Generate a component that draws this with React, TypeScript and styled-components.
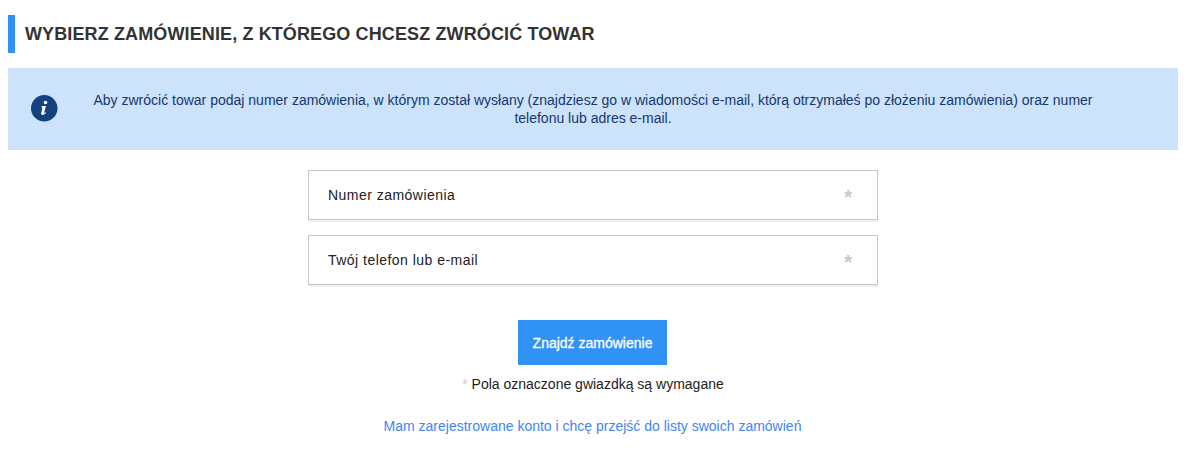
import styled, { createGlobalStyle } from 'styled-components'

const GlobalStyle = createGlobalStyle`
  html, body {
    margin: 0;
    background: #fff;
    font-family: 'Liberation Sans', Arial, sans-serif;
  }
`

const App = () => {
  return (
    <Page>
      <GlobalStyle />
      <Title>Wybierz zamówienie, z którego chcesz zwrócić towar</Title>
      <InfoBox>
        <InfoIcon viewBox="0 0 27 27" aria-hidden="true">
          <circle cx="13.5" cy="13.5" r="13.5" fill="#14407f" />
          <circle cx="14.8" cy="7.6" r="1.8" fill="#fff" />
          <path
            d="M10.9 11.3h4.3l-1.7 6.6c-.15.6.3.7 1.5-.3l.4.5c-1.2 1.4-2.4 2.2-3.6 2.2-1.2 0-1.7-.8-1.4-2l1.2-4.7c.15-.6-.2-.9-.9-.9z"
            fill="#fff"
          />
        </InfoIcon>
        <InfoText>
          Aby zwrócić towar podaj numer zamówienia, w którym został wysłany (znajdziesz go w wiadomości e-mail, którą
          otrzymałeś po złożeniu zamówienia) oraz numer telefonu lub adres e-mail.
        </InfoText>
      </InfoBox>
      <Form>
        <Field>
          <FieldLabel>Numer zamówienia</FieldLabel>
          <FieldStar>*</FieldStar>
        </Field>
        <Field>
          <FieldLabel>Twój telefon lub e-mail</FieldLabel>
          <FieldStar>*</FieldStar>
        </Field>
        <SubmitButton type="button">Znajdź zamówienie</SubmitButton>
        <RequiredNote>
          <NoteStar>*</NoteStar> Pola oznaczone gwiazdką są wymagane
        </RequiredNote>
        <AccountLink href="#">Mam zarejestrowane konto i chcę przejść do listy swoich zamówień</AccountLink>
      </Form>
    </Page>
  )
}

export default App

const Page = styled.div`
  width: 1170px;
  height: 452px;
  box-sizing: border-box;
  margin: 0 8px;
  padding-top: 15px;
`

const Title = styled.h1`
  height: 38px;
  margin: 0;
  padding-left: 10px;
  border-left: 7px solid #2f92f4;
  font-size: 18px;
  font-weight: bold;
  line-height: 38px;
  letter-spacing: 0.12px;
  color: #333;
  text-transform: uppercase;
`

const InfoBox = styled.div`
  display: flex;
  align-items: center;
  height: 82px;
  margin-top: 15px;
  background: #cde3fc;
`

const InfoIcon = styled.svg`
  flex: none;
  width: 26.5px;
  height: 26.5px;
  margin: -1px 0 0 23px;
`

const InfoText = styled.p`
  width: 1020px;
  margin: 0 0 0 25.5px;
  font-size: 14px;
  line-height: 18px;
  text-align: center;
  color: #14376f;
`

const Form = styled.div`
  display: flex;
  flex-direction: column;
  align-items: center;
  margin-top: 20px;
`

const Field = styled.div`
  display: flex;
  justify-content: space-between;
  align-items: center;
  box-sizing: border-box;
  width: 570px;
  height: 50px;
  margin-bottom: 15px;
  padding: 0 25px 0 19px;
  border: 1px solid #c6c6c6;
  box-shadow: 0 2px 0 #f0f0f0;
`

const FieldLabel = styled.span`
  font-size: 14px;
  letter-spacing: 0.47px;
  color: #222;
`

const FieldStar = styled.span`
  height: 10px;
  font-size: 20px;
  font-weight: bold;
  line-height: 14px;
  color: #c4c8cf;
`

const SubmitButton = styled.button`
  width: 149px;
  height: 45px;
  margin: 20px 1px 0 0;
  padding: 0;
  border: 0;
  background: #2f92f4;
  font-family: inherit;
  font-size: 14px;
  -webkit-text-stroke: 0.3px #fff;
  color: #fff;
`

const RequiredNote = styled.div`
  margin-top: 11px;
  font-size: 14px;
  line-height: 16px;
  color: #222;
`

const NoteStar = styled.span`
  color: #ccc;
`

const AccountLink = styled.a`
  margin: 26px 1px 0 0;
  font-size: 14px;
  line-height: 16px;
  color: #3f85f3;
  text-decoration: none;
`
